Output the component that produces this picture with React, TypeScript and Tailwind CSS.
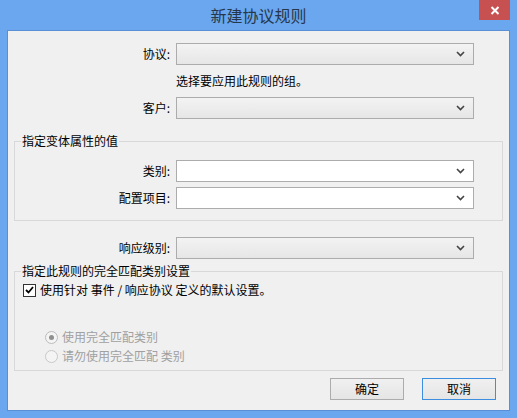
import React from "react";

const font = { fontFamily: '"Noto Sans CJK SC", "Noto Sans", sans-serif' };

const Chevron = () => (
  <svg width="9" height="6" viewBox="0 0 9 6" className="shrink-0">
    <polyline points="1,1 4.5,4.5 8,1" fill="none" stroke="#444" strokeWidth="1.6" />
  </svg>
);

const Combo = ({ disabled }: { disabled?: boolean }) => (
  <div
    className={
      "w-[298px] h-[22px] border border-[#acacac] flex items-center justify-end pr-[8px] " +
      (disabled ? "bg-gradient-to-b from-[#f3f3f3] to-[#e6e6e6]" : "bg-white")
    }
  >
    <Chevron />
  </div>
);

const Row = ({ label, w, disabled }: { label: string; w: string; disabled?: boolean }) => (
  <div className="flex items-center">
    <div className={`${w} text-right pr-[6px] text-[12px] leading-[16px] text-black`}>{label}</div>
    <Combo disabled={disabled} />
  </div>
);

export default function App() {
  return (
    <div className="w-[517px] h-[418px] bg-[#6aa7ef] flex flex-col overflow-hidden" style={font}>
      <div className="relative h-[30px] flex items-center justify-center">
        <span className="text-[16px] text-[#27374b] leading-[20px] -mt-[1px]">新建协议规则</span>
        <div className="absolute top-0 right-[7px] w-[31px] h-[20px] bg-[#c75050] flex items-center justify-center">
          <svg width="10" height="9" viewBox="0 0 10 9">
            <path d="M1.5 1 L8.5 8 M8.5 1 L1.5 8" stroke="#fff" strokeWidth="2" />
          </svg>
        </div>
      </div>
      <div className="mx-[7px] h-[381px] border border-[#5a8fd6] bg-[#f0f0f0] flex flex-col">
        <div className="mt-[12px]">
          <Row label="协议:" w="w-[168px]" disabled />
        </div>
        <div className="mt-[8px] ml-[168px] text-[12px] leading-[16px] text-black">选择要应用此规则的组。</div>
        <div className="mt-[8px]">
          <Row label="客户:" w="w-[168px]" disabled />
        </div>

        <fieldset className="mt-[14px] mx-[6px] border border-[#d8d8d8] pb-[11px]">
          <legend className="ml-[6px] px-[1px] text-[12px] leading-[16px] text-black">指定变体属性的值</legend>
          <div className="mt-[11px]">
            <Row label="类别:" w="w-[161px]" />
          </div>
          <div className="mt-[5px]">
            <Row label="配置项目:" w="w-[161px]" />
          </div>
        </fieldset>

        <div className="mt-[16px]">
          <Row label="响应级别:" w="w-[168px]" disabled />
        </div>

        <fieldset className="mt-[4px] mx-[6px] border border-[#d8d8d8] pb-[6px]">
          <legend className="ml-[6px] px-[1px] text-[12px] leading-[16px] text-black">指定此规则的完全匹配类别设置</legend>
          <div className="mt-[3px] ml-[8px] flex items-center h-[16px]">
            <div className="w-[13px] h-[13px] border border-[#333] bg-white flex items-center justify-center">
              <svg width="9" height="8" viewBox="0 0 9 8">
                <polyline points="1,4 3.5,6.5 8,1" fill="none" stroke="#000" strokeWidth="1.8" />
              </svg>
            </div>
            <span className="ml-[4px] text-[12px] leading-[16px] text-black">使用针对 事件 / 响应协议 定义的默认设置。</span>
          </div>
          <div className="mt-[31px] ml-[30px] flex items-center h-[16px]">
            <div className="w-[13px] h-[13px] rounded-full border border-[#bcbcbc] bg-[#f4f4f4] flex items-center justify-center">
              <div className="w-[5px] h-[5px] rounded-full bg-[#8f8f8f]" />
            </div>
            <span className="ml-[4px] text-[12px] leading-[16px] text-[#a0a0a0]">使用完全匹配类别</span>
          </div>
          <div className="mt-[3px] ml-[30px] flex items-center h-[16px]">
            <div className="w-[13px] h-[13px] rounded-full border border-[#c8c8c8] bg-[#f4f4f4]" />
            <span className="ml-[4px] text-[12px] leading-[16px] text-[#a0a0a0]">请勿使用完全匹配 类别</span>
          </div>
        </fieldset>

        <div className="mt-[7px] flex justify-end gap-[18px] pr-[13px]">
          <button className="w-[74px] h-[22px] border border-[#acacac] bg-gradient-to-b from-[#f0f0f0] to-[#e5e5e5] text-[12px] text-black">
            确定
          </button>
          <button className="w-[74px] h-[22px] border border-[#3c8ee0] bg-gradient-to-b from-[#f0f0f0] to-[#e5e5e5] text-[12px] text-black">
            取消
          </button>
        </div>
      </div>
    </div>
  );
}
